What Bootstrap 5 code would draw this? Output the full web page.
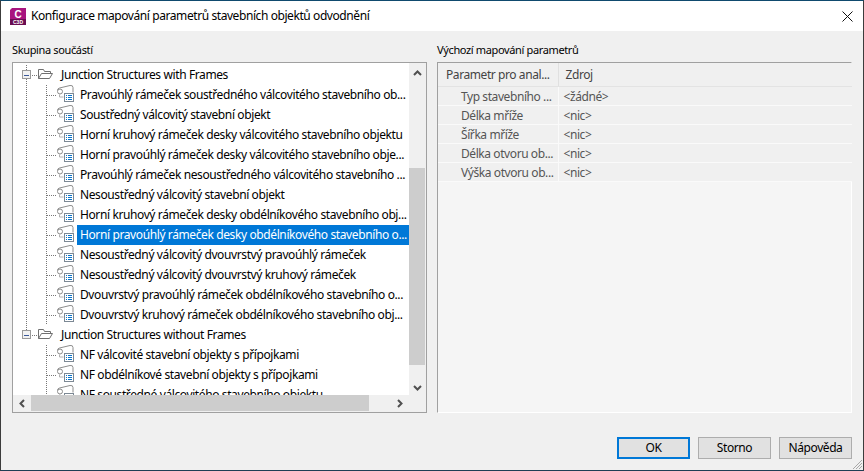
<!DOCTYPE html>
<html lang="cs">
<head>
<meta charset="utf-8">
<title>Konfigurace mapování parametrů stavebních objektů odvodnění</title>
<link href="https://cdn.jsdelivr.net/npm/bootstrap@5.3.0/dist/css/bootstrap.min.css" rel="stylesheet">
<style>
html,body{margin:0;height:100%;overflow:hidden}
body{font-family:"Noto Sans","Open Sans",sans-serif;font-size:12px;line-height:16px;color:#000;background:#f0f0f0}
.win{width:864px;height:471px;border:1px solid #3c3c3c;border-top-color:#0f4a6e;border-bottom-color:#1f3f55;background:#f0f0f0;overflow:hidden}
.ttl{height:30px;background:#fff;padding-left:9px;flex:none}
.ttl-txt{margin-left:5px;letter-spacing:-.42px}
.cls{margin-left:auto;margin-right:10px}
.mainp{padding:10px 11px 0 11px;height:382px;gap:10px;flex:none}
.pane{width:415px;flex:none}
.cap{height:21px;padding-bottom:3px;letter-spacing:-.36px;font-size:11px}
.treebox{height:352px;border:1px solid #a0a0a0;background:#fff;position:relative;overflow:hidden}
.treeview{height:333px;width:397px;overflow:hidden;padding-top:2px}
.trow{height:20px;white-space:nowrap}
.trow svg{flex:none;display:block}
.tlabel{height:20px;line-height:19px;padding-left:3px;letter-spacing:-.39px;flex:1 1 auto;overflow:hidden}
.sel{background:#0078d7;color:#fff}
.sbv{position:absolute;right:0;top:0;bottom:0;width:17px;background:#f0f0f0}
.sbh{position:absolute;left:0;right:0;bottom:0;height:17px;background:#f0f0f0}
.thumbv{position:absolute;left:0;right:1px;top:105px;height:197px;background:#cdcdcd}
.thumbh{position:absolute;left:18px;top:0;bottom:1px;width:338px;background:#cdcdcd}
.arr{position:absolute}
.mapbox{height:352px;background:#f5f5f5;border:1px solid #fff;border-top-color:#a0a0a0;border-left-color:#a0a0a0}
.maptbl{table-layout:fixed;width:414px;margin:0;border-collapse:collapse;--bs-table-bg:transparent;vertical-align:middle}
.maptbl th,.maptbl td{padding:0;white-space:nowrap;overflow:hidden;font-weight:400;box-shadow:none;vertical-align:middle}
.maptbl th{height:24px;background:#f0f0f0;color:#444;border:0;border-bottom:1px solid #e3e3e3;padding-left:7px;letter-spacing:-.42px}
.maptbl th:first-child{padding-left:8px;border-right:1px solid #e0e0e0}
.maptbl td{height:19px;padding-top:2px;color:#555;background:#f0f0f0;border:0;border-bottom:1px solid #fafafa;letter-spacing:-.42px}
.maptbl td:first-child{padding-left:23px;border-right:1px solid #fafafa}
.maptbl td:last-child{padding-left:5px}
.foot{padding:24px 11px 0 0;height:57px;gap:8px;position:relative;flex:none}
.wbtn{width:73px;height:22px;padding:0;border-radius:0;background:#e1e1e1;border:1px solid #adadad;font-size:12px;line-height:18px;color:#000;letter-spacing:-.42px}
.wbtn.dflt{border:2px solid #0078d7;line-height:16px}
.grip{position:absolute;right:0;bottom:0}
</style>
</head>
<body>
<svg width="0" height="0" class="d-block position-absolute">
  <defs>
    <g id="ico">
      <path d="M57.500 5.500q0-2 2-2.500l10.500-2.500q3-.5 3 2v5" fill="#fff" stroke="#8c8c8c"/>
      <circle cx="60" cy="6.500" r="2.500" fill="#fff" stroke="#8c8c8c"/>
      <path d="M59.500 9.500v2.500h4" fill="none" stroke="#b0b0b0"/>
      <rect x="64.500" y="8.500" width="9" height="8" fill="#fff" stroke="#7c8894"/>
      <path d="M66 10.500h1M68 10.500h4M66 12.500h1M68 12.500h4M66 14.500h1M68 14.500h4" stroke="#0a74c9"/>
    </g>
    <g id="conn">
      <line x1="46.500" y1="0" x2="46.500" y2="20" stroke="#777" stroke-dasharray="1 1"/>
      <line x1="47" y1="10.500" x2="56" y2="10.500" stroke="#777" stroke-dasharray="1 1"/>
    </g>
    <g id="folder">
      <rect x="22.500" y="5.500" width="8" height="8" fill="#f2f2f2" stroke="#9a9a9a"/>
      <line x1="24" y1="10.500" x2="29" y2="10.500" stroke="#3c5a9a"/>
      <line x1="32" y1="10.500" x2="37" y2="10.500" stroke="#777" stroke-dasharray="1 1"/>
      <path d="M38.500 13.500v-9h5l1 2h6v2M38.500 13.500l3-5h11l-3 5z" fill="#fff" stroke="#707070"/>
    </g>
    <line id="gd" x1="26.500" y1="0" x2="26.500" y2="20" stroke="#777" stroke-dasharray="1 1"/>
  </defs>
</svg>
<div class="win d-flex flex-column">
  <div class="ttl d-flex align-items-center">
    <svg width="16" height="17" viewBox="0 0 16 17">
      <path d="M0 2 2 0H16V12H0z" fill="#a8147f"/>
      <rect y="11" width="16" height="6" fill="#6a0d52"/>
      <text x="8" y="9.500" text-anchor="middle" font-family="Liberation Sans" font-weight="700" font-size="10" fill="#fff">C</text>
      <text x="8" y="16" text-anchor="middle" font-family="Liberation Sans" font-weight="700" font-size="5" fill="#fff">C3D</text>
    </svg>
    <span class="ttl-txt">Konfigurace mapování parametrů stavebních objektů odvodnění</span>
    <svg class="cls" width="11" height="11" viewBox="0 0 11 11"><path d="M.5.500l10 10M10.500.500l-10 10" stroke="#111" fill="none"/></svg>
  </div>
  <div class="mainp d-flex">
    <div class="pane d-flex flex-column">
      <div class="cap d-flex align-items-center">Skupina součástí</div>
      <div class="treebox">
        <div class="treeview">
          <div class="trow d-flex align-items-center"><svg width="45" height="20" viewBox="13 0 45 20"><line x1="26.500" y1="0" x2="26.500" y2="5" stroke="#777" stroke-dasharray="1 1"/><line x1="26.500" y1="14" x2="26.500" y2="20" stroke="#777" stroke-dasharray="1 1"/><use href="#folder"/></svg><span class="tlabel">Junction Structures with Frames</span></div>
          <div class="trow d-flex"><svg width="64" height="20" viewBox="13 0 64 20"><use href="#gd"/><use href="#conn"/><use href="#ico"/></svg><span class="tlabel">Pravoúhlý rámeček soustředného válcovitého stavebního ob...</span></div>
          <div class="trow d-flex"><svg width="64" height="20" viewBox="13 0 64 20"><use href="#gd"/><use href="#conn"/><use href="#ico"/></svg><span class="tlabel">Soustředný válcovitý stavební objekt</span></div>
          <div class="trow d-flex"><svg width="64" height="20" viewBox="13 0 64 20"><use href="#gd"/><use href="#conn"/><use href="#ico"/></svg><span class="tlabel">Horní kruhový rámeček desky válcovitého stavebního objektu</span></div>
          <div class="trow d-flex"><svg width="64" height="20" viewBox="13 0 64 20"><use href="#gd"/><use href="#conn"/><use href="#ico"/></svg><span class="tlabel">Horní pravoúhlý rámeček desky válcovitého stavebního obje...</span></div>
          <div class="trow d-flex"><svg width="64" height="20" viewBox="13 0 64 20"><use href="#gd"/><use href="#conn"/><use href="#ico"/></svg><span class="tlabel">Pravoúhlý rámeček nesoustředného válcovitého stavebního ...</span></div>
          <div class="trow d-flex"><svg width="64" height="20" viewBox="13 0 64 20"><use href="#gd"/><use href="#conn"/><use href="#ico"/></svg><span class="tlabel">Nesoustředný válcovitý stavební objekt</span></div>
          <div class="trow d-flex"><svg width="64" height="20" viewBox="13 0 64 20"><use href="#gd"/><use href="#conn"/><use href="#ico"/></svg><span class="tlabel">Horní kruhový rámeček desky obdélníkového stavebního obj...</span></div>
          <div class="trow d-flex"><svg width="64" height="20" viewBox="13 0 64 20"><use href="#gd"/><use href="#conn"/><use href="#ico"/></svg><span class="tlabel sel">Horní pravoúhlý rámeček desky obdélníkového stavebního o...</span></div>
          <div class="trow d-flex"><svg width="64" height="20" viewBox="13 0 64 20"><use href="#gd"/><use href="#conn"/><use href="#ico"/></svg><span class="tlabel">Nesoustředný válcovitý dvouvrstvý pravoúhlý rámeček</span></div>
          <div class="trow d-flex"><svg width="64" height="20" viewBox="13 0 64 20"><use href="#gd"/><use href="#conn"/><use href="#ico"/></svg><span class="tlabel">Nesoustředný válcovitý dvouvrstvý kruhový rámeček</span></div>
          <div class="trow d-flex"><svg width="64" height="20" viewBox="13 0 64 20"><use href="#gd"/><use href="#conn"/><use href="#ico"/></svg><span class="tlabel">Dvouvrstvý pravoúhlý rámeček obdélníkového stavebního o...</span></div>
          <div class="trow d-flex"><svg width="64" height="20" viewBox="13 0 64 20"><use href="#gd"/><use href="#conn"/><use href="#ico"/></svg><span class="tlabel">Dvouvrstvý kruhový rámeček obdélníkového stavebního obj...</span></div>
          <div class="trow d-flex align-items-center"><svg width="45" height="20" viewBox="13 0 45 20"><line x1="26.500" y1="0" x2="26.500" y2="5" stroke="#777" stroke-dasharray="1 1"/><use href="#folder"/></svg><span class="tlabel">Junction Structures without Frames</span></div>
          <div class="trow d-flex"><svg width="64" height="20" viewBox="13 0 64 20"><use href="#conn"/><use href="#ico"/></svg><span class="tlabel">NF válcovité stavební objekty s přípojkami</span></div>
          <div class="trow d-flex"><svg width="64" height="20" viewBox="13 0 64 20"><use href="#conn"/><use href="#ico"/></svg><span class="tlabel">NF obdélníkové stavební objekty s přípojkami</span></div>
          <div class="trow d-flex"><svg width="64" height="20" viewBox="13 0 64 20"><use href="#conn"/><use href="#ico"/></svg><span class="tlabel">NF soustředné válcovitého stavebního objektu</span></div>
        </div>
        <div class="sbv">
          <svg class="arr" style="left:4px;top:7px" width="9" height="6" viewBox="0 0 9 6"><path d="M1 5l3.500-3.500L8 5" fill="none" stroke="#505050" stroke-width="2"/></svg>
          <div class="thumbv"></div>
          <svg class="arr" style="left:4px;top:322px" width="9" height="6" viewBox="0 0 9 6"><path d="M1 1l3.500 3.500L8 1" fill="none" stroke="#505050" stroke-width="2"/></svg>
        </div>
        <div class="sbh">
          <svg class="arr" style="left:6px;top:4px" width="6" height="9" viewBox="0 0 6 9"><path d="M5 1L1.500 4.500 5 8" fill="none" stroke="#505050" stroke-width="2"/></svg>
          <div class="thumbh"></div>
          <svg class="arr" style="left:384px;top:4px" width="6" height="9" viewBox="0 0 6 9"><path d="M1 1l3.500 3.500L1 8" fill="none" stroke="#505050" stroke-width="2"/></svg>
        </div>
      </div>
    </div>
    <div class="pane d-flex flex-column">
      <div class="cap d-flex align-items-center">Výchozí mapování parametrů</div>
      <div class="mapbox">
        <table class="table maptbl">
          <colgroup><col style="width:120px"><col></colgroup>
          <thead><tr><th>Parametr pro anal...</th><th>Zdroj</th></tr></thead>
          <tbody>
            <tr><td>Typ stavebního ...</td><td>&lt;žádné&gt;</td></tr>
            <tr><td>Délka mříže</td><td>&lt;nic&gt;</td></tr>
            <tr><td>Šířka mříže</td><td>&lt;nic&gt;</td></tr>
            <tr><td>Délka otvoru ob...</td><td>&lt;nic&gt;</td></tr>
            <tr><td>Výška otvoru ob...</td><td>&lt;nic&gt;</td></tr>
          </tbody>
        </table>
      </div>
    </div>
  </div>
  <div class="foot d-flex justify-content-end align-items-start">
    <button type="button" class="btn wbtn dflt">OK</button>
    <button type="button" class="btn wbtn">Storno</button>
    <button type="button" class="btn wbtn">Nápověda</button>
    <svg class="grip" width="12" height="12" viewBox="0 0 12 12"><path d="M11 2 2 11M11 5 5 11M11 8 8 11" stroke="#a8a8a8" fill="none"/></svg>
  </div>
</div>
</body>
</html>
